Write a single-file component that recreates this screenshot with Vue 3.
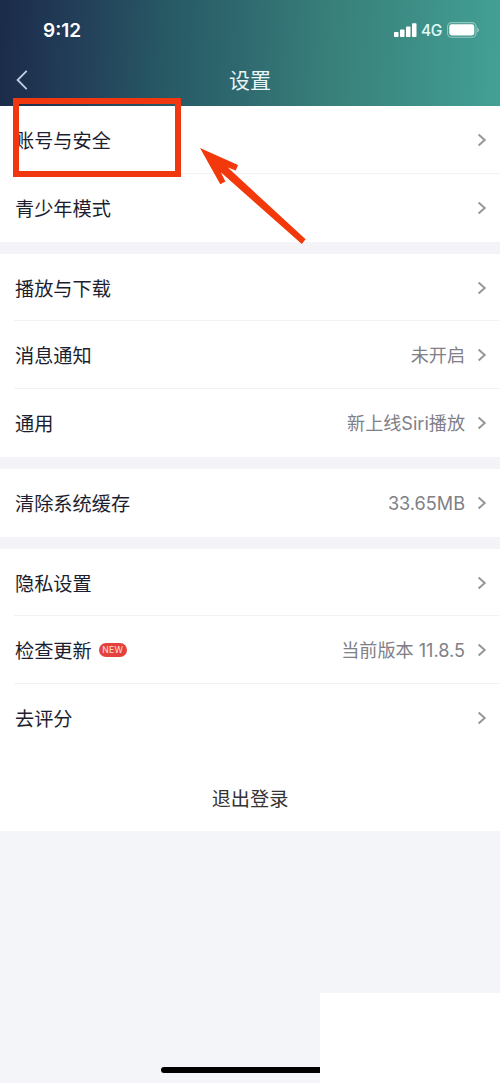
<script setup>
const groups = [
  [{ label: '账号与安全' }, { label: '青少年模式' }],
  [
    { label: '播放与下载' },
    { label: '消息通知', value: '未开启' },
    { label: '通用', value: '新上线Siri播放' },
  ],
  [{ label: '清除系统缓存', value: '33.65MB' }],
  [
    { label: '隐私设置' },
    { label: '检查更新', badge: 'NEW', value: '当前版本 11.8.5' },
    { label: '去评分' },
  ],
]
</script>

<template>
  <div class="screen">
    <header class="header">
      <div class="status">
        <span class="time">9:12</span>
        <div class="indicators">
          <svg class="signal" width="23" height="15" viewBox="0 0 23 15">
            <rect x="0" y="9" width="4.5" height="5" rx="0.8" />
            <rect x="6" y="6.5" width="4.5" height="7.5" rx="0.8" />
            <rect x="12" y="3.5" width="4.5" height="10.5" rx="0.8" />
            <rect x="18" y="0.3" width="4.5" height="13.7" rx="0.8" />
          </svg>
          <span class="network">4G</span>
          <svg class="battery" width="33" height="16" viewBox="0 0 33 16">
            <rect x="0.6" y="0.6" width="28.4" height="14.6" rx="4" fill="none" stroke="#fff" stroke-opacity=".45" stroke-width="1.1" />
            <rect x="2.3" y="2.3" width="25" height="11.2" rx="2.4" fill="#fff" />
            <path d="M30.3 5.4Q31.8 6.2 31.8 7.9T30.3 10.4Z" fill="#fff" fill-opacity=".55" />
          </svg>
        </div>
      </div>
      <div class="navbar">
        <svg class="back" width="14" height="22" viewBox="0 0 14 22">
          <path d="M11.7 1.8 2.6 11l9.1 9.2" fill="none" stroke="#c3cfe5" stroke-width="1.8" />
        </svg>
        <h1 class="title">设置</h1>
      </div>
    </header>

    <main class="list">
      <section v-for="(group, i) in groups" :key="i" class="group">
        <div v-for="row in group" :key="row.label" class="row">
          <span class="label">{{ row.label }}</span>
          <span v-if="row.badge" class="badge">{{ row.badge }}</span>
          <span class="value">{{ row.value }}</span>
          <svg class="chevron" width="10" height="14" viewBox="0 0 10 14">
            <path d="M1.6 1.6 7.7 7l-6.1 5.4" fill="none" stroke="#97979b" stroke-width="2" />
          </svg>
        </div>
      </section>
      <button class="logout">退出登录</button>
    </main>

    <div class="home-bar"></div>
    <div class="corner-panel"></div>
    <div class="highlight"></div>
    <svg class="arrow" width="110" height="100" viewBox="0 0 110 100">
      <path d="M1 1 39 18 36.8 23.4 28.8 20.6 106.6 92.2 102.8 97 21.8 25.2 26.4 34.5 21.3 37.2Z" fill="#f3380b" />
    </svg>
  </div>
</template>

<style>
body {
  margin: 0;
}
</style>

<style scoped>
.screen {
  position: relative;
  width: 500px;
  height: 1083px;
  overflow: hidden;
  background: #f4f5f8;
  font-family: Inter, "Noto Sans CJK SC", sans-serif;
}
.header {
  height: 106px;
  color: #fff;
  background: linear-gradient(92deg, #1b2b49 0%, #233f59 16%, #275a65 34%, #306b71 50%, #388079 66%, #3d8e86 82%, #43a094 100%);
}
.status {
  display: flex;
  align-items: center;
  justify-content: space-between;
  height: 60px;
  padding: 0 20px 0 43px;
}
.time {
  font-size: 19px;
  font-weight: 600;
}
.indicators {
  display: flex;
  align-items: center;
}
.signal {
  fill: #fff;
}
.network {
  width: 22px;
  margin: 0 4px;
  font-size: 15.5px;
  font-weight: 500;
  letter-spacing: -0.3px;
  color: #e1fbf6;
}
.navbar {
  display: grid;
  grid-template-columns: 40px 1fr 40px;
  align-items: center;
  height: 40px;
}
.back {
  margin-left: 15px;
}
.title {
  margin: 0;
  padding-top: 2px;
  font-size: 21px;
  line-height: 30px;
  font-weight: 400;
  text-align: center;
  color: #e9f5f7;
}
.list {
  display: flex;
  flex-direction: column;
  padding-top: 0.2px;
  background: #fff;
}
.group {
  border-bottom: 12px solid #f4f4f8;
  background: #fff;
}
.group:last-of-type {
  border-bottom-color: #fff;
}
.row {
  position: relative;
  display: flex;
  align-items: center;
  box-sizing: border-box;
  height: 67.75px;
  padding: 0 13px 0 15px;
}
.row:not(:last-child)::after {
  content: "";
  position: absolute;
  left: 14px;
  right: 0;
  bottom: 0;
  height: 1px;
  background: #f3f3f5;
}
.label {
  padding-top: 2px;
  font-size: 19.2px;
  line-height: 28px;
  color: #1c1e30;
}
.badge {
  width: 28px;
  height: 14px;
  margin-left: 7px;
  border-radius: 7px;
  background: #e3423d;
  color: #ffe3df;
  font-size: 8.5px;
  line-height: 14px;
  letter-spacing: 0.3px;
  text-align: center;
}
.value {
  margin-left: auto;
  font-size: 18.1px;
  line-height: 28px;
  color: #808087;
}
.chevron {
  margin-left: 12px;
}
.logout {
  height: 67.5px;
  padding: 0;
  border: 0;
  background: #fff;
  color: #333;
  font-family: inherit;
  font-size: 19.2px;
}
.home-bar {
  position: absolute;
  left: 161px;
  top: 1067px;
  width: 178px;
  height: 6px;
  border-radius: 3px;
  background: #000;
}
.corner-panel {
  position: absolute;
  left: 320px;
  top: 993px;
  width: 180px;
  height: 90px;
  background: #fff;
}
.highlight {
  position: absolute;
  left: 13px;
  top: 98px;
  box-sizing: border-box;
  width: 168px;
  height: 79px;
  border: 6px solid #f0370f;
}
.arrow {
  position: absolute;
  left: 199px;
  top: 147px;
}
</style>
